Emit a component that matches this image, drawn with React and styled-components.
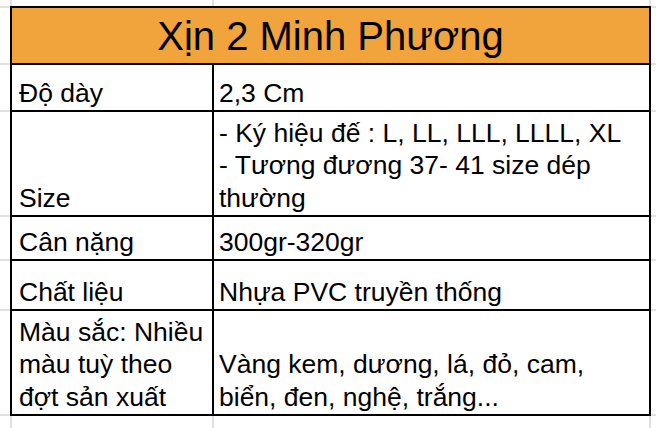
import React from "react";
import styled, { createGlobalStyle } from "styled-components";

const GRID = "#e1e1e1";

const GlobalStyle = createGlobalStyle`
  html, body {
    margin: 0;
    padding: 0;
  }
  body {
    width: 656px;
    height: 428px;
    overflow: hidden;
    font-family: "Liberation Sans", Arial, sans-serif;
    color: #000;
    background-color: #fff;
    background-image:
      linear-gradient(to right,
        transparent 10px, ${GRID} 10px, ${GRID} 12px, transparent 12px,
        transparent 212px, ${GRID} 212px, ${GRID} 214px, transparent 214px,
        transparent 649px, ${GRID} 649px, ${GRID} 651px, transparent 651px),
      linear-gradient(to bottom,
        transparent 6px, ${GRID} 6px, ${GRID} 8px, transparent 8px,
        transparent 63px, ${GRID} 63px, ${GRID} 65px, transparent 65px,
        transparent 110px, ${GRID} 110px, ${GRID} 112px, transparent 112px,
        transparent 215px, ${GRID} 215px, ${GRID} 217px, transparent 217px,
        transparent 259px, ${GRID} 259px, ${GRID} 261px, transparent 261px,
        transparent 309px, ${GRID} 309px, ${GRID} 311px, transparent 311px,
        transparent 414px, ${GRID} 414px, ${GRID} 416px, transparent 416px);
    background-repeat: no-repeat;
  }
`;

const Page = styled.div`
  padding: 6px 0 0 10px;
`;

const Sheet = styled.div`
  width: 637px;
  display: grid;
  grid-template-columns: 200px 435px;
  grid-template-rows: 55px 45px 103px 42px 48px 103px;
  gap: 2px;
  padding: 2px;
  background: #000;
`;

const TitleCell = styled.div`
  grid-column: 1 / -1;
  background: #f1a33c;
  display: flex;
  align-items: flex-end;
  justify-content: center;
  font-size: 40px;
  line-height: 46px;
  padding-bottom: 4px;
  box-sizing: border-box;
`;

const Cell = styled.div`
  background: #fff;
  display: flex;
  align-items: flex-end;
  box-sizing: border-box;
  padding: 0 4px 1px ${(p) => (p.$value ? "5px" : "7px")};
  font-size: 26.5px;
  line-height: 32.5px;
  white-space: nowrap;
  overflow: hidden;
`;

const Lines = styled.div`
  display: flex;
  flex-direction: column;
`;

const rows = [
  { label: ["Độ dày"], value: ["2,3 Cm"] },
  {
    label: ["Size"],
    value: [
      "- Ký hiệu đế : L, LL, LLL, LLLL, XL",
      "- Tương đương 37- 41 size dép",
      "thường",
    ],
  },
  { label: ["Cân nặng"], value: ["300gr-320gr"] },
  { label: ["Chất liệu"], value: ["Nhựa PVC truyền thống"] },
  {
    label: ["Màu sắc: Nhiều", "màu tuỳ theo", "đợt sản xuất"],
    value: ["Vàng kem, dương, lá, đỏ, cam,", "biển, đen, nghệ, trắng..."],
  },
];

export default function App() {
  return (
    <>
      <GlobalStyle />
      <Page>
        <Sheet>
          <TitleCell>Xịn 2 Minh Phương</TitleCell>
          {rows.map((r, i) => (
            <React.Fragment key={i}>
              <Cell>
                <Lines>
                  {r.label.map((t) => (
                    <span key={t}>{t}</span>
                  ))}
                </Lines>
              </Cell>
              <Cell $value>
                <Lines>
                  {r.value.map((t) => (
                    <span key={t}>{t}</span>
                  ))}
                </Lines>
              </Cell>
            </React.Fragment>
          ))}
        </Sheet>
      </Page>
    </>
  );
}
